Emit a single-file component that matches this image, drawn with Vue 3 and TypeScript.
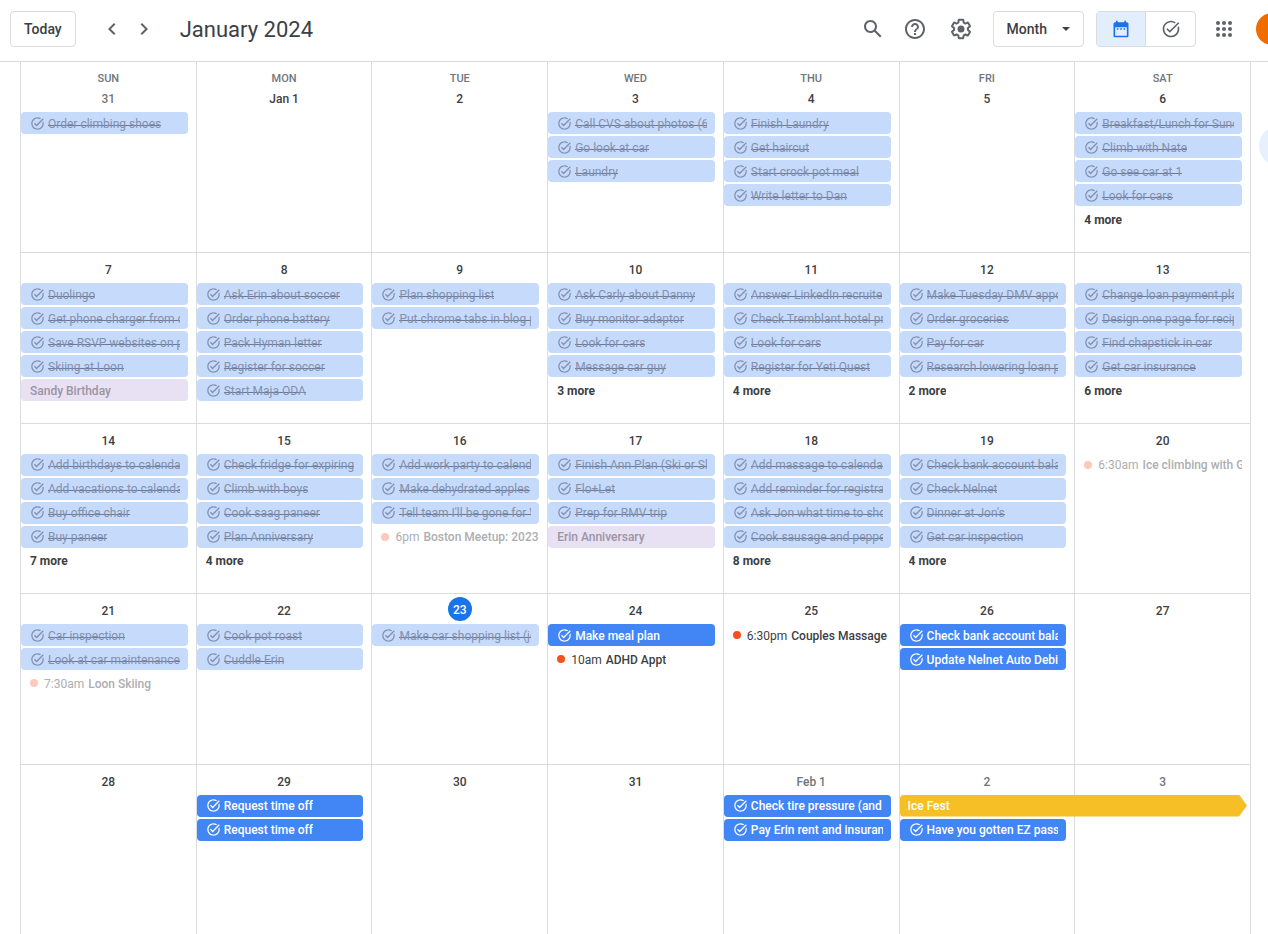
<script setup lang="ts">
type Kind = 'done' | 'task' | 'holiday' | 'timed' | 'span'

interface CalendarEvent {
  kind: Kind
  title: string
  time?: string
  past?: boolean
}

interface Day {
  label: string
  outside?: boolean
  today?: boolean
  events: CalendarEvent[]
  more?: number
}

const weekdays = ['Sun', 'Mon', 'Tue', 'Wed', 'Thu', 'Fri', 'Sat']

const done = (...titles: string[]): CalendarEvent[] => titles.map((title) => ({ kind: 'done', title }))
const task = (...titles: string[]): CalendarEvent[] => titles.map((title) => ({ kind: 'task', title }))
const holiday = (title: string): CalendarEvent => ({ kind: 'holiday', title })
const timed = (time: string, title: string, past = false): CalendarEvent => ({ kind: 'timed', time, title, past })
const day = (label: string, events: CalendarEvent[] = [], more?: number): Day => ({ label, events, more })

const weeks: Day[][] = [
  [
    { label: '31', outside: true, events: done('Order climbing shoes') },
    day('Jan 1'),
    day('2'),
    day('3', done('Call CVS about photos (6', 'Go look at car', 'Laundry')),
    day('4', done('Finish Laundry', 'Get haircut', 'Start crock pot meal', 'Write letter to Dan')),
    day('5'),
    day('6', done('Breakfast/Lunch for Sund', 'Climb with Nate', 'Go see car at 1', 'Look for cars'), 4),
  ],
  [
    day('7', [
      ...done('Duolingo', 'Get phone charger from c', 'Save RSVP websites on p', 'Skiing at Loon'),
      holiday('Sandy Birthday'),
    ]),
    day('8', done('Ask Erin about soccer', 'Order phone battery', 'Pack Hyman letter', 'Register for soccer', 'Start Maja ODA')),
    day('9', done('Plan shopping list', 'Put chrome tabs in blog p')),
    day('10', done('Ask Carly about Danny', 'Buy monitor adaptor', 'Look for cars', 'Message car guy'), 3),
    day('11', done('Answer LinkedIn recruite', 'Check Tremblant hotel pr', 'Look for cars', 'Register for Yeti Quest'), 4),
    day('12', done('Make Tuesday DMV appo', 'Order groceries', 'Pay for car', 'Research lowering loan p'), 2),
    day('13', done('Change loan payment pla', 'Design one page for recip', 'Find chapstick in car', 'Get car insurance'), 6),
  ],
  [
    day('14', done('Add birthdays to calenda', 'Add vacations to calenda', 'Buy office chair', 'Buy paneer'), 7),
    day('15', done('Check fridge for expiring', 'Climb with boys', 'Cook saag paneer', 'Plan Anniversary'), 4),
    day('16', [
      ...done('Add work party to calend', 'Make dehydrated apples', "Tell team I'll be gone for W"),
      timed('6pm', 'Boston Meetup: 2023', true),
    ]),
    day('17', [...done('Finish Ann Plan (Ski or Sk', 'Flo+Let', 'Prep for RMV trip'), holiday('Erin Anniversary')]),
    day('18', done('Add massage to calenda', 'Add reminder for registra', 'Ask Jon what time to sho', 'Cook sausage and peppe'), 8),
    day('19', done('Check bank account bala', 'Check Nelnet', "Dinner at Jon's", 'Get car inspection'), 4),
    day('20', [timed('6:30am', 'Ice climbing with G', true)]),
  ],
  [
    day('21', [...done('Car inspection', 'Look at car maintenance'), timed('7:30am', 'Loon Skiing', true)]),
    day('22', done('Cook pot roast', 'Cuddle Erin')),
    { label: '23', today: true, events: done('Make car shopping list (je') },
    day('24', [...task('Make meal plan'), timed('10am', 'ADHD Appt')]),
    day('25', [timed('6:30pm', 'Couples Massage')]),
    day('26', task('Check bank account bala', 'Update Nelnet Auto Debi')),
    day('27'),
  ],
  [
    day('28'),
    day('29', task('Request time off', 'Request time off')),
    day('30'),
    day('31'),
    { label: 'Feb 1', outside: true, events: task('Check tire pressure (and', 'Pay Erin rent and insuran') },
    { label: '2', outside: true, events: [{ kind: 'span', title: 'Ice Fest' }, ...task('Have you gotten EZ pass')] },
    { label: '3', outside: true, events: [] },
  ],
]

const dots = [6, 12, 18].flatMap((y) => [6, 12, 18].map((x) => ({ x, y })))

const checkPath =
  'M22 5.18 10.59 16.6l-4.24-4.24 1.41-1.41 2.83 2.83 10-10L22 5.18zm-2.21 5.04c.13.57.21 1.17.21 1.78 0 4.42-3.58 8-8 8s-8-3.58-8-8 3.58-8 8-8c1.58 0 3.04.46 4.28 1.25l1.44-1.44A9.9 9.9 0 0 0 12 2C6.48 2 2 6.48 2 12s4.48 10 10 10 10-4.48 10-10c0-1.19-.22-2.33-.6-3.39l-1.61 1.61z'
</script>

<template>
  <div class="app">
    <header class="topbar">
      <button type="button" class="outlined today-button">Today</button>
      <div class="pager">
        <button type="button" class="icon-button" aria-label="Previous month">
          <svg viewBox="0 0 24 24"><path d="M15.41 7.41 14 6l-6 6 6 6 1.41-1.41L10.83 12z" /></svg>
        </button>
        <button type="button" class="icon-button" aria-label="Next month">
          <svg viewBox="0 0 24 24"><path d="M10 6 8.59 7.41 13.17 12l-4.58 4.59L10 18l6-6z" /></svg>
        </button>
      </div>
      <h1>January 2024</h1>
      <div class="tools">
        <button type="button" class="icon-button" aria-label="Search">
          <svg viewBox="0 0 24 24"><path d="M20.49 19l-5.73-5.73C15.53 12.2 16 10.91 16 9.5 16 5.91 13.09 3 9.5 3S3 5.91 3 9.5 5.91 16 9.5 16c1.41 0 2.7-.47 3.77-1.24L19 20.49 20.49 19zM5 9.5C5 7.01 7.01 5 9.5 5S14 7.01 14 9.5 11.99 14 9.5 14 5 11.99 5 9.5z" /></svg>
        </button>
        <button type="button" class="icon-button help" aria-label="Support">
          <svg viewBox="0 0 24 24"><path d="M11 18h2v-2h-2v2zm1-16C6.48 2 2 6.48 2 12s4.48 10 10 10 10-4.48 10-10S17.52 2 12 2zm0 18c-4.41 0-8-3.59-8-8s3.59-8 8-8 8 3.59 8 8-3.59 8-8 8zm0-14c-2.21 0-4 1.79-4 4h2c0-1.1.9-2 2-2s2 .9 2 2c0 2-3 1.75-3 5h2c0-2.25 3-2.5 3-5 0-2.21-1.79-4-4-4z" /></svg>
        </button>
        <button type="button" class="icon-button settings" aria-label="Settings">
          <svg viewBox="0 0 24 24">
            <path d="M13.85 22.25h-3.7c-.74 0-1.36-.54-1.45-1.27l-.27-1.89c-.27-.14-.53-.29-.79-.46l-1.8.72c-.7.26-1.47-.03-1.81-.65L2.2 15.53c-.35-.66-.2-1.44.36-1.88l1.53-1.19c-.01-.15-.02-.3-.02-.46 0-.15.01-.31.02-.46l-1.52-1.19c-.59-.45-.74-1.26-.37-1.88l1.85-3.19c.34-.62 1.11-.9 1.79-.63l1.81.73c.26-.17.52-.32.78-.46l.27-1.91c.09-.7.71-1.25 1.44-1.25h3.7c.74 0 1.36.54 1.45 1.27l.27 1.89c.27.14.53.29.79.46l1.8-.72c.71-.26 1.48.03 1.82.65l1.84 3.18c.36.66.2 1.44-.36 1.88l-1.52 1.19c.01.15.02.3.02.46s-.01.31-.02.46l1.52 1.19c.56.45.72 1.23.37 1.86l-1.86 3.22c-.34.62-1.11.9-1.8.63l-1.8-.72c-.26.17-.52.32-.78.46l-.27 1.91c-.1.68-.72 1.22-1.46 1.22zm-3.23-2h2.76l.37-2.55.53-.22c.44-.18.88-.44 1.34-.78l.45-.34 2.38.96 1.38-2.4-2.03-1.58.07-.56c.03-.26.06-.51.06-.78s-.03-.53-.06-.78l-.07-.56 2.03-1.58-1.39-2.4-2.39.96-.45-.35c-.42-.32-.87-.58-1.33-.77l-.52-.22-.37-2.55h-2.76l-.37 2.55-.53.21c-.44.19-.88.44-1.34.79l-.45.33-2.38-.95-1.39 2.39 2.03 1.58-.07.56a7 7 0 0 0-.06.79c0 .26.02.53.06.78l.07.56-2.03 1.58 1.38 2.4 2.39-.96.45.35c.43.33.86.58 1.33.77l.53.22.38 2.55z" />
            <circle cx="12" cy="12" r="3.5" />
          </svg>
        </button>
        <button type="button" class="outlined view-button" aria-haspopup="menu">
          Month
          <span class="caret"></span>
        </button>
        <div class="switch">
          <button type="button" class="selected" aria-label="Calendar" aria-pressed="true">
            <svg viewBox="0 0 24 24">
              <path d="M19 4h-1V2h-2v2H8V2H6v2H5c-1.1 0-2 .9-2 2v14c0 1.1.9 2 2 2h14c1.1 0 2-.9 2-2V6c0-1.1-.9-2-2-2zm0 16H5V10h14v10zM7 11h2v2H7zM11 11h2v2h-2zM15 11h2v2h-2z" />
            </svg>
          </button>
          <button type="button" aria-label="Tasks" aria-pressed="false">
            <svg viewBox="0 0 24 24"><path :d="checkPath" /></svg>
          </button>
        </div>
        <button type="button" class="icon-button apps" aria-label="Google apps">
          <svg viewBox="0 0 24 24">
            <circle v-for="dot in dots" :key="`${dot.x}-${dot.y}`" :cx="dot.x" :cy="dot.y" r="2" />
          </svg>
        </button>
        <button type="button" class="avatar" aria-label="Account"></button>
      </div>
    </header>

    <main class="month">
      <div class="weekdays">
        <div v-for="name in weekdays" :key="name" class="weekday">{{ name }}</div>
      </div>
      <div v-for="(week, w) in weeks" :key="w" class="week">
        <section v-for="(d, i) in week" :key="i" class="day">
          <h2 class="date" :class="{ outside: d.outside, today: d.today }">
            <span>{{ d.label }}</span>
          </h2>
          <div class="events">
            <button v-for="(e, n) in d.events" :key="n" type="button" class="event" :class="[e.kind, { past: e.past }]">
              <svg v-if="e.kind === 'done' || e.kind === 'task'" viewBox="0 0 24 24"><path :d="checkPath" /></svg>
              <span v-if="e.kind === 'timed'" class="dot"></span>
              <span v-if="e.time" class="time">{{ e.time }}</span>
              <span class="title">{{ e.title }}</span>
            </button>
            <button v-if="d.more" type="button" class="event more">
              <span class="title">{{ d.more }} more</span>
            </button>
          </div>
        </section>
      </div>
      <button type="button" class="side-tab" aria-label="Open side panel"></button>
    </main>
  </div>
</template>

<style>
body {
  background: #fff;
}
</style>

<style scoped>
.app {
  display: flex;
  flex-direction: column;
  min-height: 100vh;
  overflow: hidden;
  color: #3c4043;
  font-family: Roboto, "Liberation Sans", sans-serif;
  font-size: 12px;
}

.app * {
  box-sizing: border-box;
}

button {
  padding: 0;
  border: 0;
  background: none;
  color: inherit;
  font: inherit;
  cursor: pointer;
}

svg {
  display: block;
  flex: none;
  fill: currentColor;
}

.topbar {
  display: flex;
  align-items: center;
  height: 62px;
  padding: 0 0 4px 10px;
  border-bottom: 1px solid #dadce0;
}

.outlined {
  height: 36px;
  border: 1px solid #dadce0;
  border-radius: 4px;
  font-size: 14px;
  font-weight: 500;
}

.today-button {
  padding: 1px 13px 0;
}

.pager {
  display: flex;
  gap: 8px;
  margin-left: 24px;
}

.icon-button {
  color: #5f6368;
}

.icon-button svg {
  width: 24px;
  height: 24px;
}

h1 {
  margin: 0 0 0 24px;
  padding-top: 2px;
  font-size: 22px;
  font-weight: 400;
  line-height: 28px;
  white-space: nowrap;
}

.tools {
  display: flex;
  align-items: center;
  margin-left: auto;
  margin-right: -20px;
}

.help {
  margin-left: 18px;
}

.settings {
  margin-left: 22px;
}

.view-button {
  display: flex;
  align-items: center;
  gap: 15px;
  margin-left: 20px;
  padding: 1px 13px 0;
}

.caret {
  border: 4px solid transparent;
  border-top-color: #3c4043;
  border-bottom: 0;
}

.switch {
  display: flex;
  height: 36px;
  margin-left: 12px;
  border: 1px solid #dadce0;
  border-radius: 4px;
  overflow: hidden;
}

.switch button {
  display: grid;
  place-items: center;
  width: 49px;
  color: #5f6368;
}

.switch button.selected {
  border-right: 1px solid #dadce0;
  background: #e2eefc;
  color: #1a73e8;
}

.switch svg {
  width: 20px;
  height: 20px;
}

.apps {
  margin-left: 16px;
}

.avatar {
  width: 32px;
  height: 32px;
  margin-left: 20px;
  border-radius: 50%;
  background: #ef6c00;
}

.month {
  position: relative;
  display: grid;
  flex: 1;
  grid-template-rows: 20px repeat(5, minmax(160px, 1fr));
  padding: 0 17px 0 20px;
}

.weekdays,
.week {
  display: grid;
  grid-template-columns: repeat(7, minmax(0, 1fr));
  border-right: 1px solid #dadce0;
}

.weekday,
.day {
  border-left: 1px solid #dadce0;
}

.weekday {
  padding-top: 9px;
  color: #70757a;
  font-size: 11px;
  font-weight: 500;
  line-height: 16px;
  text-align: center;
  text-transform: uppercase;
}

.week + .week .day {
  border-top: 1px solid #dadce0;
}

.date {
  height: 30px;
  margin: 0;
  padding-top: 5px;
  font-size: 12px;
  font-weight: 500;
  line-height: 24px;
  text-align: center;
}

.date.outside {
  color: #70757a;
}

.date.today {
  padding-top: 3px;
}

.today span {
  display: block;
  width: 24px;
  height: 24px;
  margin: 0 auto;
  padding-top: 1px;
  border-radius: 50%;
  background: #1a73e8;
  color: #fff;
}

.events {
  display: grid;
  gap: 2px;
  margin-right: 8px;
}

.event {
  display: flex;
  align-items: center;
  min-width: 0;
  height: 22px;
  padding: 0 8px;
  border-radius: 4px;
  line-height: 22px;
  text-align: left;
  white-space: nowrap;
}

.event svg {
  width: 15px;
  height: 15px;
  margin: 0 3px 0 1px;
}

.title,
.time {
  padding-top: 1px;
}

.title {
  min-width: 0;
  overflow: hidden;
  font-weight: 500;
}

.done {
  background: #c6dafc;
  color: #8290ac;
}

.done .title {
  background: linear-gradient(#6c7993, #6c7993) 0 13px / 100% 1px no-repeat;
  font-weight: 400;
}

.task {
  background: #4285f4;
  color: #fff;
}

.holiday {
  padding-left: 9px;
  background: #e8e0f3;
  color: #9a95a2;
}

.timed {
  padding: 0 0 0 9px;
}

.timed.past {
  color: #adaeb0;
}

.dot {
  flex: none;
  width: 8px;
  height: 8px;
  margin-right: 6px;
  border-radius: 50%;
  background: #f4511e;
}

.past .dot {
  background: #fcc9bb;
}

.time {
  margin-right: 4px;
}

.span {
  position: relative;
  z-index: 1;
  width: calc(200% + 14px);
  background: #f6bf26;
  clip-path: polygon(0 0, calc(100% - 8px) 0, 100% 50%, calc(100% - 8px) 100%, 0 100%);
  color: #fff;
}

.more {
  padding-left: 9px;
}

.more .title {
  font-weight: 700;
}

.side-tab {
  position: absolute;
  top: 64px;
  right: -31px;
  width: 40px;
  height: 40px;
  border-radius: 50%;
  background: #e8f0fe;
}
</style>
